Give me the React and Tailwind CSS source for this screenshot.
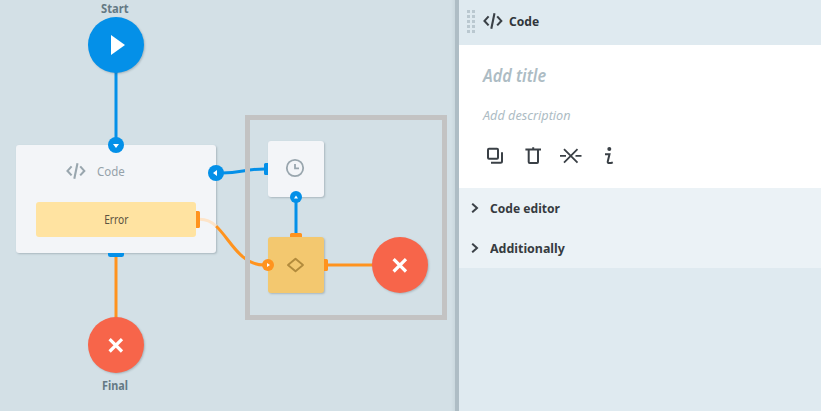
import React from "react";

const CodeIcon = ({ className }) => (
  <svg viewBox="0 0 20 16" className={className} fill="none" stroke="currentColor" strokeWidth="2.1">
    <path d="M5.6 3.4 1.5 7.9l4.1 4.5M14.2 3.4l4.1 4.5-4.1 4.5M11.5 0.2 8.3 15.8" />
  </svg>
);

const Cross = () => (
  <svg viewBox="0 0 16 16" className="h-4 w-4" stroke="#fff" strokeWidth="3.2">
    <path d="M1.6 2.1 14 14.5M14 2.1 1.6 14.5" />
  </svg>
);

const shadow = "shadow-[1px_1px_2px_rgba(60,80,90,0.28)]";

function Round({ place, children }) {
  return (
    <div className={`absolute flex h-14 w-14 items-center justify-center rounded-full ${shadow} ${place}`}>
      {children}
    </div>
  );
}

function Canvas() {
  return (
    <main className="relative h-full w-[455px] shrink-0 overflow-hidden bg-[#d3e0e6]">
      <div className="absolute right-0 top-0 h-full w-1 bg-linear-to-r from-[#d3e0e6] to-[#cad8de]" />
      <div className={`absolute left-4 top-[145px] h-[108px] w-[200px] rounded-[3px] bg-[#f3f5f8] ${shadow}`}>
        <CodeIcon className="absolute left-[50px] top-[18px] h-4 w-5 text-[#99a6ae]" />
        <span className="absolute left-[81px] top-[16px] origin-left scale-x-[0.883] text-[13px] leading-[20px] text-[#95a2aa]">Code</span>
        <div className="absolute left-5 top-[57px] flex h-[35px] w-40 items-center justify-center rounded-[3px] bg-[#ffe3a1]">
          <span className="scale-x-[0.85] text-[12px] text-[#5c5341]">Error</span>
        </div>
      </div>
      <div className={`absolute left-[268px] top-[141px] h-14 w-14 rounded-[3px] bg-[#f3f5f8] ${shadow}`} />
      <div className={`absolute left-[268px] top-[237px] h-14 w-14 rounded-[3px] bg-[#f3c86f] ${shadow}`} />

      <svg className="absolute left-0 top-0" width="455" height="411" viewBox="0 0 455 411" fill="none">
        <g stroke="#0490e8" strokeWidth="3">
          <path d="M116 72V140M296 200V233" />
          <path d="M222 173C242 173 244 169 265 169" />
        </g>
        <g stroke="#ff931e" strokeWidth="3">
          <path d="M116 257V319M327 265H374" />
          <path d="M216 226C230 239 240 265 264 265" />
          <path d="M200 219.3C206 219.3 211 221.5 216 226" stroke="#fde4c9" />
        </g>
        <path d="M108 253h16v1.5q0 2.5-2.5 2.5h-11q-2.500 0-2.500-2.500zM268 163v12h-2.500q-1.500 0-1.500-1.500v-9q0-1.500 1.500-1.500z" fill="#0490e8" />
        <path d="M196 211h2.500q1.500 0 1.500 1.500v14q0 1.500-1.500 1.500H196zM290 237v-2.500q0-1.500 1.500-1.500h9q1.500 0 1.500 1.500v2.500zM324 259h2.500q1.500 0 1.500 1.500v9q0 1.500-1.500 1.500H324z" fill="#ff931e" />
        <g fill="#0490e8">
          <circle cx="116" cy="145" r="8" />
          <circle cx="216" cy="173" r="8" />
          <circle cx="296" cy="197" r="6" />
        </g>
        <circle cx="268" cy="265" r="6" fill="#ff931e" />
        <path d="M113 144h6l-3 4zM217 170v6l-4-3zM294 198.500h4l-2-3zM267 263v4l3-2z" fill="#fff" />
        <circle cx="295" cy="168" r="8.200" stroke="#99a6ae" strokeWidth="1.800" />
        <path d="M295 164v4.300h4" stroke="#99a6ae" strokeWidth="1.800" />
        <path d="M295.500 258.800 303 265l-7.500 6.200L288 265z" stroke="#b28b3c" strokeWidth="1.900" strokeLinejoin="round" />
      </svg>

      <div className="absolute left-[245px] top-[115px] h-[205px] w-[202px] border-[5px] border-[#c3c3c3]" />

      <span className="absolute left-[101px] top-[-1px] origin-left scale-x-[0.93] text-[12px] font-bold leading-[20px] text-[#647984]">Start</span>
      <Round place="left-[88px] top-[17px] bg-[#0490e8]">
        <svg viewBox="0 0 14 20" className="ml-[3px] h-5 w-3.5">
          <path d="M0 0v20l14-10z" fill="#fff" />
        </svg>
      </Round>
      <Round place="left-[88px] top-[317px] bg-[#f7654a]"><Cross /></Round>
      <Round place="left-[372px] top-[237px] bg-[#f7654a]"><Cross /></Round>
      <span className="absolute left-[102px] top-[376px] origin-left scale-x-[0.9] text-[12px] font-bold leading-[20px] text-[#647984]">Final</span>
    </main>
  );
}

function Section({ label, scale }) {
  return (
    <div className="flex h-10 items-center bg-[#ebf2f6] pl-[12px]">
      <svg viewBox="0 0 8 10" className="h-2.5 w-2" fill="none" stroke="#3c4248" strokeWidth="2">
        <path d="M1.200 .7 6 5 1.200 9.300" />
      </svg>
      <span className={`ml-[11px] origin-left whitespace-nowrap pt-[2px] text-[13px] font-bold text-[#363b40] ${scale}`}>{label}</span>
    </div>
  );
}

function Inspector() {
  return (
    <aside className="flex min-w-0 flex-1 flex-col border-l-4 border-[#aebdc5] bg-[#dfeaf0]">
      <header className="flex h-[45px] shrink-0 items-center pb-[3px] pl-2">
        <div className="grid grid-cols-2 gap-[2px]">
          {Array.from({ length: 10 }, (_, i) => <i key={i} className="h-[3px] w-[3px] bg-[#bac8d0]" />)}
        </div>
        <CodeIcon className="ml-2 h-4 w-5 text-[#3a4046]" />
        <span className="ml-[6px] origin-left scale-x-[0.93] pt-[2px] text-[13px] font-bold text-[#30363b]">Code</span>
      </header>
      <section className="h-[143px] shrink-0 bg-white pl-6 pt-[18px]">
        <div className="h-[26px] w-max origin-left scale-x-[0.95] text-[17px] font-semibold italic leading-[26px] text-[#adbcc4]">Add title</div>
        <div className="mt-[16px] h-[21px] w-max origin-left scale-x-[0.975] text-[13px] italic leading-[20px] text-[#adbcc4]">Add description</div>
        <svg width="134" height="20" viewBox="0 0 134 20" className="mt-[20px]" fill="none" stroke="#3a4046" strokeWidth="2">
          <rect x="5" y="2.8" width="10" height="10" rx="1" />
          <path d="M19 6.300v9q0 1.500-1.500 1.500H8" />
          <path d="M42.400 3.500H58M50.200 3.500V1.200M45.700 3.500v12.500q0 1 1 1H54q1 0 1-1V3.500" />
          <path d="M81 3.100 94.500 16.600M94.500 3.100 81 16.600M77 9.800h6M92.500 9.800h6" strokeWidth="1.800" />
          <circle cx="126.300" cy="3" r="2" fill="#3a4046" stroke="none" />
          <path d="M122 8.200h4.500l-1.700 7q-.5 1.900 1.500 1.900 1.800 0 3.500-.8" />
        </svg>
      </section>
      <Section label="Code editor" scale="scale-x-[0.93]" />
      <Section label="Additionally" scale="scale-x-[0.955]" />
    </aside>
  );
}

export default function App() {
  return (
    <div className="flex h-[411px] w-[821px] overflow-hidden bg-[#d3e0e6] font-['Noto_Sans','Open_Sans',sans-serif]">
      <Canvas />
      <Inspector />
    </div>
  );
}
